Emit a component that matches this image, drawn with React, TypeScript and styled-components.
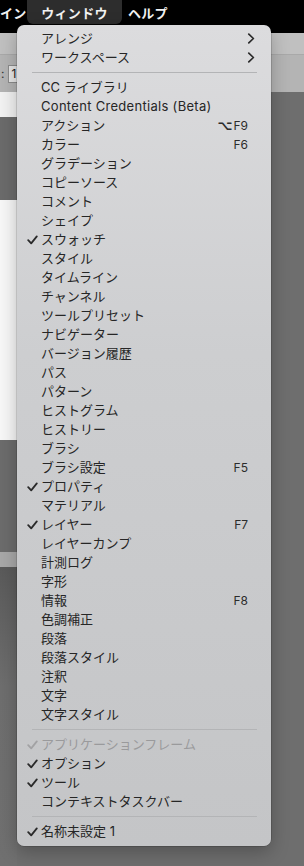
import * as React from "react";
import styled, { createGlobalStyle } from "styled-components";

const GlobalStyle = createGlobalStyle`
  html, body {
    margin: 0;
    padding: 0;
    width: 304px;
    height: 866px;
    overflow: hidden;
    background: #6e6e6e;
  }
  * {
    box-sizing: border-box;
  }
`;

const Screen = styled.div`
  position: relative;
  width: 304px;
  height: 866px;
  display: flex;
  flex-direction: column;
  font-family: Inter, "Noto Sans CJK JP", sans-serif;
  overflow: hidden;
`;

const MenuBar = styled.div`
  height: 33px;
  background: #000;
  display: flex;
  align-items: flex-start;
  gap: 1px;
  flex-shrink: 0;
`;

const MenuBarItem = styled.div<{ $active?: boolean; $width?: number }>`
  height: 24px;
  display: flex;
  align-items: center;
  justify-content: ${(p) => (p.$active ? "center" : "flex-start")};
  width: ${(p) => (p.$width ? `${p.$width}px` : "auto")};
  margin-right: ${(p) => (p.$active ? "5px" : "0")};
  white-space: nowrap;
  border-radius: 0 0 6px 6px;
  background: ${(p) => (p.$active ? "#2d2d2d" : "transparent")};
  color: #f2f2f2;
  font-size: 13px;
  font-weight: 700;
  letter-spacing: 0.3px;
`;

const OptionsBar = styled.div`
  flex-shrink: 0;
  display: flex;
  flex-direction: column;
`;

const OptionsTop = styled.div`
  height: 22px;
  background: #c0c0c0;
  border-bottom: 1px solid #a9a9a9;
`;

const OptionsBottom = styled.div`
  height: 37px;
  background: #b4b4b4;
  display: flex;
  align-items: center;
  padding-left: 1px;
  font-size: 12px;
  color: #333;
`;

const ValueBox = styled.span`
  margin-left: 4px;
  height: 18px;
  width: 14px;
  border: 1px solid #8c8c8c;
  border-right: none;
  background: #e6e6e6;
  display: flex;
  align-items: center;
  padding-left: 2px;
  font-size: 12px;
  color: #222;
`;

const Workspace = styled.div`
  flex: 1;
  display: flex;
  background: #6e6e6e;
`;

const SideColumn = styled.div`
  width: 17px;
  display: flex;
  flex-direction: column;
`;

const SideBlock = styled.div<{ $h?: number; $bg: string }>`
  height: ${(p) => (p.$h ? `${p.$h}px` : "auto")};
  flex: ${(p) => (p.$h ? "0 0 auto" : "1")};
  background: ${(p) => p.$bg};
`;

const Dropdown = styled.div`
  position: absolute;
  left: 17px;
  top: 25px;
  width: 254px;
  padding: 4px 0 5px;
  border-radius: 7px;
  background: linear-gradient(180deg, #dcdcde 0%, #cdced0 40%, #c4c5c7 100%);
  box-shadow: 0 0 0 0.5px rgba(0, 0, 0, 0.25), 0 6px 18px rgba(0, 0, 0, 0.25);
  display: flex;
  flex-direction: column;
`;

const Row = styled.div<{ $disabled?: boolean }>`
  height: 19px;
  display: grid;
  grid-template-columns: 14px 1fr auto;
  align-items: center;
  padding: 0 16px 0 10px;
  color: ${(p) => (p.$disabled ? "#9a9a9c" : "#262626")};
  font-size: 13px;
  white-space: nowrap;
`;

const CheckSlot = styled.span`
  display: flex;
  align-items: center;
  justify-content: flex-start;
`;

const Label = styled.span`
  line-height: 19px;
`;

const Latin = styled.span`
  letter-spacing: 0.3px;
`;

const Shortcut = styled.span`
  display: flex;
  align-items: center;
  gap: 1px;
  font-size: 12px;
  color: #2c2c2c;
  padding-right: 7px;
`;

const OptionKey = styled.span`
  font-family: "DejaVu Sans", sans-serif;
  font-size: 13px;
  font-weight: 700;
`;

const Chevron = styled.span`
  display: flex;
  align-items: center;
  padding-left: 1px;
`;

const Separator = styled.div`
  height: 11px;
  display: flex;
  align-items: center;
  padding: 0 14px 0 15px;

  &::after {
    content: "";
    flex: 1;
    height: 1px;
    background: #b3b4b6;
  }
`;

function Check({ color }: { color: string }) {
  return (
    <svg width="11" height="10" viewBox="0 0 11 10">
      <path
        d="M1.2 5.2 L4.2 8.4 L9.8 1.4"
        fill="none"
        stroke={color}
        strokeWidth="1.8"
        strokeLinecap="round"
        strokeLinejoin="round"
      />
    </svg>
  );
}

function ChevronIcon() {
  return (
    <svg width="8" height="11" viewBox="0 0 8 11">
      <path
        d="M1.8 1.2 L6.4 5.5 L1.8 9.8"
        fill="none"
        stroke="#2a2a2a"
        strokeWidth="1.7"
        strokeLinecap="round"
        strokeLinejoin="round"
      />
    </svg>
  );
}

type Item =
  | { sep: true }
  | {
      sep?: false;
      label: string;
      latin?: boolean;
      checked?: boolean;
      disabled?: boolean;
      submenu?: boolean;
      key?: string;
      option?: boolean;
    };

const items: Item[] = [
  { label: "アレンジ", submenu: true },
  { label: "ワークスペース", submenu: true },
  { sep: true },
  { label: "CC ライブラリ" },
  { label: "Content Credentials (Beta)", latin: true },
  { label: "アクション", key: "F9", option: true },
  { label: "カラー", key: "F6" },
  { label: "グラデーション" },
  { label: "コピーソース" },
  { label: "コメント" },
  { label: "シェイプ" },
  { label: "スウォッチ", checked: true },
  { label: "スタイル" },
  { label: "タイムライン" },
  { label: "チャンネル" },
  { label: "ツールプリセット" },
  { label: "ナビゲーター" },
  { label: "バージョン履歴" },
  { label: "パス" },
  { label: "パターン" },
  { label: "ヒストグラム" },
  { label: "ヒストリー" },
  { label: "ブラシ" },
  { label: "ブラシ設定", key: "F5" },
  { label: "プロパティ", checked: true },
  { label: "マテリアル" },
  { label: "レイヤー", checked: true, key: "F7" },
  { label: "レイヤーカンプ" },
  { label: "計測ログ" },
  { label: "字形" },
  { label: "情報", key: "F8" },
  { label: "色調補正" },
  { label: "段落" },
  { label: "段落スタイル" },
  { label: "注釈" },
  { label: "文字" },
  { label: "文字スタイル" },
  { sep: true },
  { label: "アプリケーションフレーム", checked: true, disabled: true },
  { label: "オプション", checked: true },
  { label: "ツール", checked: true },
  { label: "コンテキストタスクバー" },
  { sep: true },
  { label: "名称未設定 1", checked: true },
];

export default function App() {
  return (
    <>
      <GlobalStyle />
      <Screen>
        <MenuBar>
          <MenuBarItem $width={26}>イン</MenuBarItem>
          <MenuBarItem $active $width={95}>
            ウィンドウ
          </MenuBarItem>
          <MenuBarItem>ヘルプ</MenuBarItem>
        </MenuBar>
        <OptionsBar>
          <OptionsTop />
          <OptionsBottom>
            :<ValueBox>1</ValueBox>
          </OptionsBottom>
        </OptionsBar>
        <Workspace>
          <SideColumn>
            <SideBlock $h={25} $bg="#f2f2f2" />
            <SideBlock $h={83} $bg="#6b6b6b" />
            <SideBlock $h={240} $bg="#f7f7f7" />
            <SideBlock $h={112} $bg="#6c6c6c" />
            <SideBlock $h={15} $bg="#a8a8a8" />
            <SideBlock $bg="linear-gradient(180deg, #5a5a5a 0%, #6e6e6e 40%, #707070 100%)" />
          </SideColumn>
        </Workspace>

        <Dropdown>
          {items.map((it, i) =>
            it.sep ? (
              <Separator key={i} />
            ) : (
              <Row key={i} $disabled={it.disabled}>
                <CheckSlot>
                  {it.checked && (
                    <Check color={it.disabled ? "#a2a2a4" : "#2a2a2a"} />
                  )}
                </CheckSlot>
                <Label>{it.latin ? <Latin>{it.label}</Latin> : it.label}</Label>
                {it.submenu ? (
                  <Chevron>
                    <ChevronIcon />
                  </Chevron>
                ) : it.key ? (
                  <Shortcut>
                    {it.option && <OptionKey>⌥</OptionKey>}
                    {it.key}
                  </Shortcut>
                ) : (
                  <span />
                )}
              </Row>
            )
          )}
        </Dropdown>
      </Screen>
    </>
  );
}
